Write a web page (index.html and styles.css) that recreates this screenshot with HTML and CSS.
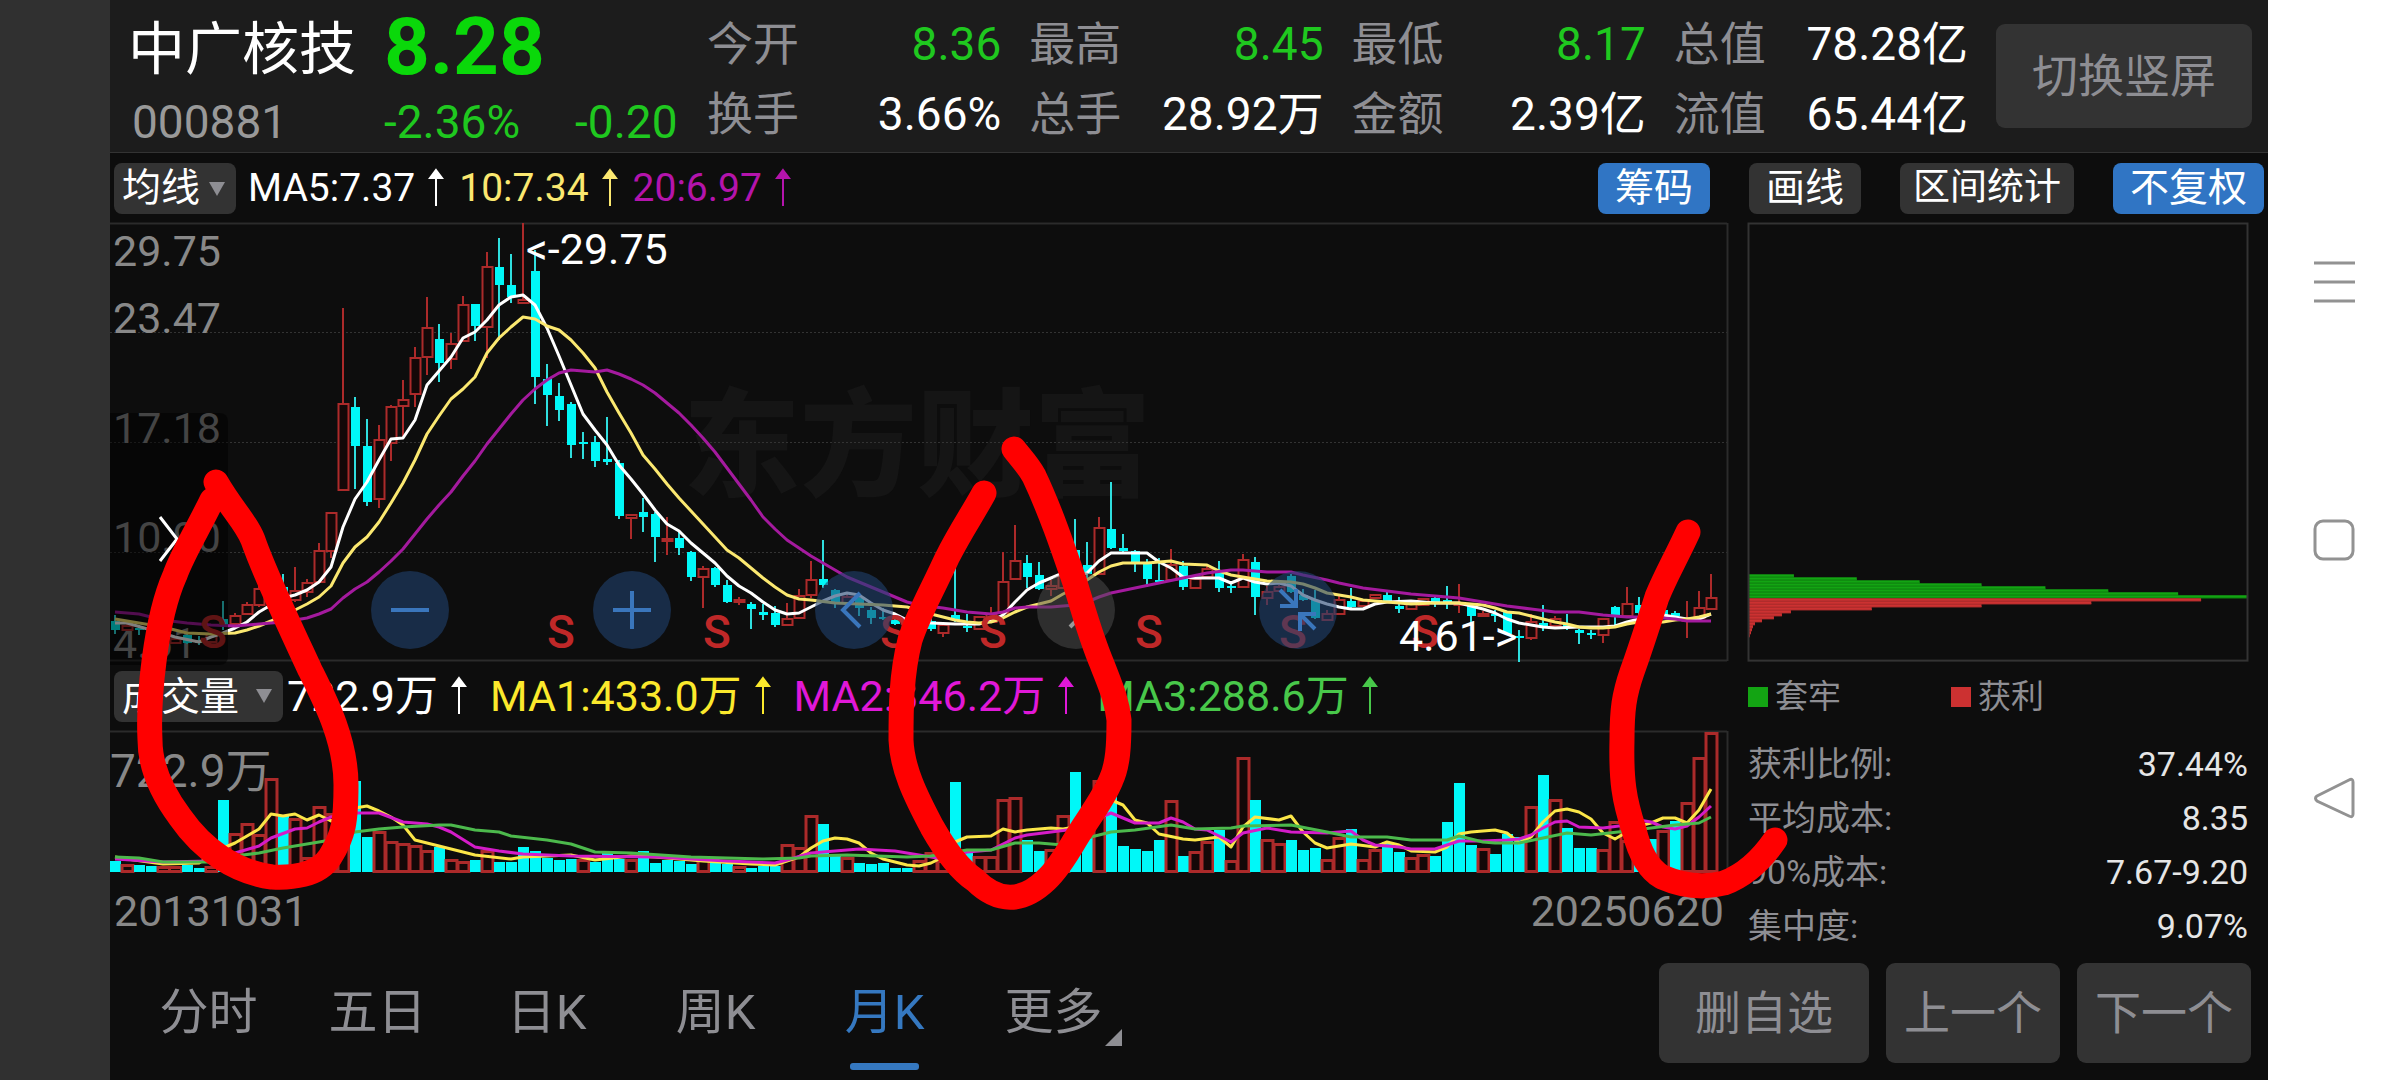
FILE: index.html
```html
<!DOCTYPE html>
<html lang="zh-CN">
<head>
    <meta charset="UTF-8">
    <title>中广核技 000881</title>
    <link rel="stylesheet" href="styles.css">
</head>
<body>
    <div class="screen">
        <div class="app">
            <header class="quote">
                <div class="stock">
                    <h1 class="name">中广核技</h1>
                    <span class="price">8.28</span>
                    <span class="code">000881</span>
                    <span class="change"><span>-2.36%</span><span>-0.20</span></span>
                </div>
                <dl class="facts">
                    <div><dt>今开</dt><dd class="down">8.36</dd></div>
                    <div><dt>最高</dt><dd class="down">8.45</dd></div>
                    <div><dt>最低</dt><dd class="down">8.17</dd></div>
                    <div><dt>总值</dt><dd>78.28亿</dd></div>
                    <div><dt>换手</dt><dd>3.66%</dd></div>
                    <div><dt>总手</dt><dd>28.92万</dd></div>
                    <div><dt>金额</dt><dd>2.39亿</dd></div>
                    <div><dt>流值</dt><dd>65.44亿</dd></div>
                </dl>
                <button class="grey-btn rotate">切换竖屏</button>
            </header>

            <div class="toolbar">
                <div class="picker">
                    <select aria-label="主图指标"><option>均线</option></select>
                </div>
                <div class="ma">
                    <span class="white">MA5:7.37<svg class="up" viewBox="0 0 12 36"><path d="M6 36V6M6 0L12 8H0Z"/></svg></span>
                    <span class="pale">10:7.34<svg class="up" viewBox="0 0 12 36"><path d="M6 36V6M6 0L12 8H0Z"/></svg></span>
                    <span class="purple">20:6.97<svg class="up" viewBox="0 0 12 36"><path d="M6 36V6M6 0L12 8H0Z"/></svg></span>
                </div>
                <div class="tools">
                    <button class="on">筹码</button>
                    <button>画线</button>
                    <button class="wide">区间统计</button>
                    <button class="on">不复权</button>
                </div>
            </div>

            <main class="body">
                <section class="charts">
                    <div class="kline">
                        <svg id="kline" viewBox="110 223 1618 438">
                            <text class="watermark" x="683" y="487">东方财富</text>
                            <path class="grid" d="M110 332.5H1727M110 442.5H1727M110 552.5H1727"/>
                            <path class="frame" d="M110 223.5H1727M1727.5 223V661M110 660.5H1727"/>
                            <g class="axis">
                                <text x="113" y="266">29.75</text>
                                <text x="113" y="333">23.47</text>
                                <text x="113" y="443">17.18</text>
                                <text x="113" y="552">10.90</text>
                                <text x="113" y="658">4.61</text>
                            </g>
                            <g id="candles"></g>
                            <g id="averages"></g>
                            <g class="sell">
                                <text x="213" y="648">S</text>
                                <text x="561" y="648">S</text>
                                <text x="717" y="648">S</text>
                                <text x="894" y="648">S</text>
                                <text x="993" y="648">S</text>
                                <text x="1149" y="648">S</text>
                                <text x="1293" y="648">S</text>
                                <text x="1425" y="648">S</text>
                            </g>
                            <g class="peak">
                                <text x="526" y="264">&lt;-29.75</text>
                                <text x="1399" y="651">4.61-&gt;</text>
                            </g>
                        </svg>
                        <button class="drawer" aria-label="展开"><svg viewBox="0 0 20 48"><path d="M1 2L18 24L1 46"/></svg></button>
                        <div class="controls">
                            <button aria-label="缩小"><svg viewBox="0 0 78 78"><path d="M20 39H58"/></svg></button>
                            <button aria-label="放大"><svg viewBox="0 0 78 78"><path d="M20 39H58M39 20V58"/></svg></button>
                            <button aria-label="左移"><svg viewBox="0 0 78 78"><path d="M45 22L28 39L45 56"/></svg></button>
                            <button class="off" aria-label="右移"><svg viewBox="0 0 78 78"><path d="M33 22L50 39L33 56"/></svg></button>
                            <button aria-label="收起"><svg viewBox="0 0 78 78"><path d="M21 19L36 34M21 35H37V18M56 58L42 44M41 60V43H57"/></svg></button>
                        </div>
                    </div>

                    <div class="volbar">
                        <div class="picker long">
                            <select aria-label="副图指标"><option>成交量</option></select>
                        </div>
                        <div class="ma">
                            <span class="white">722.9万<svg class="up" viewBox="0 0 12 36"><path d="M6 36V6M6 0L12 8H0Z"/></svg></span>
                            <span class="yellow">MA1:433.0万<svg class="up" viewBox="0 0 12 36"><path d="M6 36V6M6 0L12 8H0Z"/></svg></span>
                            <span class="magenta">MA2:346.2万<svg class="up" viewBox="0 0 12 36"><path d="M6 36V6M6 0L12 8H0Z"/></svg></span>
                            <span class="green">MA3:288.6万<svg class="up" viewBox="0 0 12 36"><path d="M6 36V6M6 0L12 8H0Z"/></svg></span>
                        </div>
                    </div>

                    <svg id="volume" viewBox="110 731 1618 142">
                        <path class="frame" d="M110 731.5H1727M1727.5 731V872"/>
                        <text class="volmax" x="110" y="787">722.9万</text>
                        <g id="bars"></g>
                        <g id="volaverages"></g>
                    </svg>
                    <div class="dates"><span>20131031</span><span>20250620</span></div>
                </section>

                <aside class="chips">
                    <svg id="chips" viewBox="0 0 501 440">
                        <g id="chiprows"></g>
                        <rect class="box" x="0.5" y="0.5" width="500" height="438"/>
                    </svg>
                    <div class="legend">
                        <span class="lost">套牢</span>
                        <span class="gain">获利</span>
                    </div>
                    <dl class="stats">
                        <div><dt>获利比例:</dt><dd>37.44%</dd></div>
                        <div><dt>平均成本:</dt><dd>8.35</dd></div>
                        <div><dt>90%成本:</dt><dd>7.67-9.20</dd></div>
                        <div><dt>集中度:</dt><dd>9.07%</dd></div>
                    </dl>
                </aside>
            </main>

            <footer class="bottom">
                <nav class="tabs">
                    <button>分时</button>
                    <button>五日</button>
                    <button>日K</button>
                    <button>周K</button>
                    <button class="active">月K</button>
                    <button class="more">更多</button>
                </nav>
                <div class="actions">
                    <button class="grey-btn">删自选</button>
                    <button class="grey-btn">上一个</button>
                    <button class="grey-btn">下一个</button>
                </div>
            </footer>
        </div>

        <nav class="system">
            <button aria-label="菜单"><svg viewBox="0 0 44 44"><path d="M2 3H43M2 22H43M2 41H43"/></svg></button>
            <button aria-label="主页"><svg viewBox="0 0 44 44"><rect x="3" y="3" width="38" height="38" rx="8"/></svg></button>
            <button aria-label="返回"><svg viewBox="0 0 44 44"><path d="M37 4L5 20Q2 22 5 25L37 40Q41 42 41 38V6Q41 2 37 4Z"/></svg></button>
        </nav>

        <svg class="marks" viewBox="0 0 2400 1080" preserveAspectRatio="none">
            <path d="M216 482C232 510 246 522 253 540C265 575 300 648 310 670C325 700 346 740 346 785C346 820 344 835 330 857C318 876 290 878 272 877C235 872 203 850 180 817C160 790 150 765 150 740C148 700 155 620 175 575C182 555 200 525 212 500"/>
            <path d="M984 493C972 515 960 532 947 558C930 595 918 615 910 640C901 675 901 710 901 740C902 768 915 795 932 827C945 850 960 870 975 880C998 903 1022 903 1046 880C1058 869 1068 852 1075 840C1088 818 1103 800 1111 780C1118 765 1119 745 1119 720C1117 700 1110 685 1102 664C1090 635 1085 615 1075 583C1062 545 1050 510 1034 476C1028 465 1020 457 1014 449"/>
            <path d="M1688 532C1675 560 1665 577 1657 597C1648 625 1640 650 1632 672C1624 695 1622 710 1622 740C1621 780 1624 800 1634 830C1640 855 1650 870 1662 877C1685 887 1705 888 1724 883C1748 874 1764 856 1775 840"/>
        </svg>
    </div>
    <script src="chart.js"></script>
</body>
</html>
```

FILE: styles.css
```css
* {
    box-sizing: border-box;
}
body {
    margin: 0;
    background: #303030;
    color: #fff;
    font-family: Roboto, "Noto Sans CJK SC", sans-serif;
}
button, select {
    font-family: inherit;
    color: inherit;
    line-height: 50px;
    border: none;
    padding: 0;
    margin: 0;
    cursor: pointer;
}
dl, dd, h1 {
    margin: 0;
}
svg {
    display: block;
    overflow: visible;
}
.screen {
    position: relative;
    display: flex;
    min-height: 100vh;
    padding-left: 110px;
}
.app {
    flex: 1;
    min-width: 0;
    display: flex;
    flex-direction: column;
    background: #0d0d0d;
}

/* quote header */
.quote {
    display: flex;
    align-items: center;
    height: 153px;
    padding: 0 16px 0 18px;
    background: #1c1c1c;
    border-bottom: 1px solid #333;
}
.stock {
    display: grid;
    grid-template-columns: 256px 1fr;
    flex: 0 0 579px;
    align-items: center;
}
.name {
    padding-top: 6px;
    font-size: 57px;
    font-weight: 400;
    line-height: 82px;
}
.price {
    font-size: 80px;
    font-weight: 700;
    line-height: 82px;
    color: #0ad80a;
}
.code, .change {
    padding: 4px 0 0 4px;
    font-size: 46px;
    line-height: 54px;
    color: #999;
}
.change {
    display: flex;
    gap: 55px;
    padding-left: 0;
    color: #1fc81f;
}
.facts {
    flex: 1;
    display: grid;
    grid-template-columns: repeat(4, 1fr);
    column-gap: 28px;
    padding-top: 6px;
    font-size: 46px;
    line-height: 70px;
    white-space: nowrap;
}
.facts div {
    display: flex;
    justify-content: space-between;
}
.facts dt {
    color: #8e8e93;
}
.down {
    color: #1fc81f;
}
.grey-btn {
    height: 100px;
    border-radius: 9px;
    background: #333;
    color: #8e8e93;
    font-size: 46px;
}
.rotate {
    margin-left: 28px;
    padding: 0 36px;
    height: 104px;
}

/* indicator rows */
.toolbar, .volbar {
    display: flex;
    align-items: center;
    height: 70px;
    padding: 0 4px;
    font-size: 39px;
    line-height: 50px;
    white-space: nowrap;
}
.volbar {
    font-size: 43px;
}
.picker {
    position: relative;
    width: 122px;
}
.picker.long {
    width: 169px;
}
.picker::after {
    content: "";
    position: absolute;
    right: 11px;
    top: 19px;
    border: 8px solid transparent;
    border-top: 14px solid #8e8e93;
    border-bottom: none;
    pointer-events: none;
}
.picker select {
    appearance: none;
    width: 100%;
    height: 51px;
    padding-left: 8px;
    border-radius: 8px;
    background: #333;
    color: #fff;
    font-size: 39px;
}
.ma {
    display: flex;
    gap: 17px;
    margin-left: 12px;
}
.volbar .ma {
    gap: 25px;
    margin-left: 4px;
}
.ma span {
    display: flex;
    align-items: center;
    gap: 15px;
}
.up {
    width: 12px;
    height: 36px;
    fill: currentColor;
    stroke: currentColor;
    stroke-width: 2;
}
.white { color: #fff; }
.pale { color: #fbe870; }
.purple { color: #b414ac; }
.yellow { color: #fbe92c; }
.magenta { color: #e018d8; }
.green { color: #48c84a; }
.tools {
    display: flex;
    gap: 39px;
    margin-left: auto;
}
.tools button {
    height: 51px;
    padding: 0 17px;
    border-radius: 8px;
    background: #333;
    color: #fff;
    font-size: 39px;
}
.tools .wide {
    padding: 0 13px;
    font-size: 37px;
}
.tools .on {
    background: #3075c4;
}

/* charts */
.body {
    display: grid;
    grid-template-columns: minmax(0, 1618fr) minmax(0, 540fr);
}
.charts svg, .chips svg {
    width: 100%;
}
.kline {
    position: relative;
}
.frame, .box {
    fill: none;
    stroke: #2b2b2b;
    stroke-width: 2;
}
.box {
    stroke: #333;
}
.grid {
    stroke: #333;
    stroke-dasharray: 2 2;
}
.watermark {
    font-size: 117px;
    font-weight: 900;
    fill: #151515;
}
.axis, .peak {
    font-size: 43px;
    fill: #888;
}
.peak {
    fill: #fff;
}
.sell {
    font-size: 46px;
    font-weight: 500;
    text-anchor: middle;
    fill: #bf2828;
}
.volmax {
    font-size: 46px;
    fill: #888;
}
.rise {
    fill: #140808;
    stroke: #ac2a2a;
    stroke-width: 2;
}
#bars .rise {
    stroke-width: 3;
}
.fall {
    fill: #00f8f8;
}
.wick-rise, .wick-fall {
    stroke: #ac2a2a;
    stroke-width: 2;
}
.wick-fall {
    stroke: #2fdede;
}
.line {
    fill: none;
    stroke: currentColor;
    stroke-width: 3;
    stroke-linejoin: round;
}
.charts .drawer {
    position: absolute;
    left: 0;
    bottom: -4px;
    width: 118px;
    height: 252px;
    padding-left: 49px;
    border-radius: 0 8px 8px 0;
    background: rgba(0, 0, 0, .5);
}
.charts .drawer svg {
    width: 20px;
    height: 48px;
    fill: none;
    stroke: #fff;
    stroke-width: 3;
}
.controls {
    position: absolute;
    left: 261px;
    bottom: 12px;
    display: flex;
    gap: 144px;
}
.controls button {
    width: 78px;
    height: 78px;
    border-radius: 50%;
    background: rgba(32, 65, 110, .6);
}
.controls .off {
    background: rgba(80, 80, 80, .5);
}
.controls svg {
    fill: none;
    stroke: #3a76bc;
    stroke-width: 4;
}
.controls .off svg {
    stroke: #999;
}
.charts .up {
    width: 12px;
}
.dates {
    display: flex;
    justify-content: space-between;
    padding: 0 4px;
    font-size: 43px;
    line-height: 76px;
    color: #888;
}

/* chip distribution */
.chips {
    padding: 0 20px;
}
.lost-row { fill: #13a413; }
.lost-edge { fill: #0f8d0f; }
.gain-row { fill: #cc3131; }
.gain-edge { fill: #b92f2f; }
.legend {
    display: grid;
    grid-template-columns: 203px 1fr;
    font-size: 33px;
    line-height: 70px;
    color: #8e8e93;
}
.legend span {
    display: flex;
    align-items: center;
    gap: 7px;
}
.legend span::before {
    content: "";
    width: 20px;
    height: 20px;
    background: #13a413;
}
.legend .gain::before {
    background: #cc3131;
}
.stats {
    padding-top: 5px;
    font-size: 34px;
    line-height: 54px;
}
.stats div {
    display: flex;
    justify-content: space-between;
}
.stats dt {
    color: #8e8e93;
}
.stats dd {
    color: #e6e6e6;
}

/* bottom bar */
.bottom {
    display: flex;
    align-items: center;
    justify-content: space-between;
    margin-top: auto;
    padding: 0 17px 17px 14px;
}
.tabs {
    display: grid;
    grid-template-columns: repeat(6, 169px);
}
.tabs button {
    position: relative;
    height: 100px;
    background: none;
    color: #8e8e93;
    font-size: 49px;
}
.tabs .active {
    color: #3578c0;
}
.tabs .active::after {
    content: "";
    position: absolute;
    left: 50px;
    right: 50px;
    bottom: -7px;
    height: 7px;
    border-radius: 3px;
    background: #3578c0;
}
.tabs .more::after {
    content: "";
    position: absolute;
    right: 16px;
    bottom: 17px;
    border-left: 17px solid transparent;
    border-bottom: 17px solid #8e8e93;
}
.actions {
    display: flex;
    gap: 17px;
}
.actions .grey-btn {
    padding: 0 18px;
}
.actions .grey-btn:first-child {
    padding: 0 36px;
}

/* phone navigation */
.system {
    display: flex;
    flex-direction: column;
    align-items: center;
    justify-content: center;
    gap: 214px;
    width: 132px;
    padding-right: 1px;
    background: #fff;
}
.system button {
    width: 44px;
    height: 44px;
    background: none;
}
.system svg {
    fill: none;
    stroke: #929292;
    stroke-width: 3;
}

/* pen marks over everything */
.marks {
    position: absolute;
    left: 0;
    top: 0;
    width: 100%;
    height: 100%;
    pointer-events: none;
    fill: none;
    stroke: #f00;
    stroke-width: 25;
    stroke-linecap: round;
    stroke-linejoin: round;
}
```

FILE: chart.js
```js
const START = 115;
const STEP = 12;
const BASE = 872;

// r/f = rise/fall, then high, body top, body bottom, low
const candles = `f615,621,630,634 r624,625,630,631 f625,628,630,635 f627,629,640,641 f630,632,640,642 r636,638,643,644
f634,635,643,644 f636,640,643,645 r631,633,642,643 f601,619,625,630 r613,615,624,625 r602,604,614,615 r584,588,605,607
r578,580,590,594 f574,587,598,600 r567,590,600,602 r579,582,592,597 r543,550,582,583 r512,512,551,558 r308,403,490,490
f397,407,446,489 f419,446,502,506 r425,439,499,508 r405,406,443,461 r380,399,406,438 r347,357,394,407 r297,327,357,375
f324,339,363,382 r333,343,359,369 r296,304,341,342 f304,304,326,341 r252,266,327,358 f238,267,285,340 f254,285,297,303
r223,299,303,303 f250,271,377,404 f364,379,395,426 f383,396,410,421 f402,404,445,458 f432,442,444,459 f436,442,461,467
f417,459,462,465 f460,463,516,519 r514,514,518,539 f498,512,517,532 f512,514,537,562 r517,538,541,555 f532,538,548,555
f551,552,577,581 r566,568,577,608 f567,568,585,587 f580,585,602,603 r597,599,602,605 f602,604,609,629 f604,612,615,620
f606,613,625,627 r603,618,625,626 r589,595,618,619 r561,579,595,598 f540,579,585,588 f589,590,603,608 r594,596,603,605
f594,598,608,616 f607,610,618,624 f608,617,619,620 f618,620,624,625 r618,620,630,631 f619,622,628,630 f618,621,629,631
r624,624,633,637 f568,615,620,622 f614,626,628,632 r616,616,629,629 r607,613,622,622 r552,581,613,615 r525,560,579,580
f555,563,577,588 f562,575,589,590 r580,585,589,596 r575,575,588,588 f519,550,570,575 f542,565,574,580 r517,527,574,575
f482,529,548,549 f534,548,551,552 f550,551,563,572 f559,564,579,587 f558,580,582,582 r549,564,580,580 f561,566,587,590
r578,578,588,588 r565,568,577,578 f561,573,588,592 f583,586,588,593 r554,559,587,588 f557,562,597,615 r586,591,598,605
r585,586,591,592 f574,576,592,593 f589,595,600,601 f590,600,618,619 r610,613,620,620 r596,599,614,615 f588,601,607,608
r599,600,606,607 r594,594,598,598 f592,595,601,602 f597,606,609,613 r602,602,609,609 r598,598,605,605 f597,598,602,607
f586,600,603,609 r584,602,605,613 f605,606,616,625 r611,613,616,617 f610,614,616,622 f611,612,634,635 f630,636,638,662
r614,621,638,640 f605,623,627,631 r616,618,626,627 f614,624,627,630 f629,630,633,644 f630,633,635,639 r618,618,635,643
f606,607,616,625 r587,603,616,617 f597,605,613,618 r604,608,615,617 f606,610,616,618 f611,613,616,618 r601,619,621,638
r591,607,618,619 r574,597,609,610`.split(/\s+/);

// top of each volume bar
const volumes = `f861 r864 f865 f866 r866 r866 f865 f868 r866 f800 r833 r823 r834 r778 f815 r818 r857 r806 r813 r815
f781 f837 r831 r841 r843 r845 r850 f847 r859 r861 f860 r850 f862 f862 f847 f851 f858 f860 f859 r859
f862 f851 f859 r859 f851 f863 f860 f861 f864 r859 f862 f864 r866 f868 f866 f866 r844 r847 r815 f824
f856 r857 f863 f864 f863 f868 f868 r860 r852 r860 f782 f850 r856 r856 r799 r797 f840 f851 r849 r815
f772 f837 r780 f790 f846 f849 f851 f840 r800 f856 r851 r841 f830 r860 r757 f800 r839 r843 f840 f850
f848 r859 r837 f829 r859 r849 f842 f852 r857 r854 f856 f822 f783 f845 r848 f854 f834 f837 r806 f775
r799 f828 f848 f848 r849 r821 r840 f847 f839 r830 f821 r802 r757 r732`.split(/\s+/);

// moving averages, index:y
const priceLines = [
    ['#fff', '0:623 1:623 3:630 5:637 7:642 8:637 9:633 10:628 11:622 12:612 13:605 14:598 15:595 16:590 17:582 18:567 19:527 20:499 21:482 22:460 23:439 24:438 25:420 26:385 27:371 28:357 29:338 30:332 31:320 32:305 33:297 34:295 35:305 36:328 37:356 38:385 39:414 40:430 41:445 42:465 43:479 44:494 45:510 46:524 47:531 48:543 49:553 50:563 51:576 52:586 53:593 54:602 55:610 56:614 57:613 58:607 59:601 60:596 61:593 62:595 63:603 64:610 65:614 66:620 68:623 70:624 72:624 73:621 74:615 75:602 76:590 77:583 78:578 79:573 80:576 81:573 82:561 83:553 84:553 86:553 87:562 88:568 89:577 90:578 92:578 93:583 94:578 95:582 96:584 97:583 98:586 99:595 100:600 101:604 102:607 103:609 104:609 105:604 106:602 108:601 110:603 112:603 113:606 114:609 115:613 116:619 117:623 118:625 119:627 120:628 122:627 124:627 125:626 126:622 127:619 128:617 129:615 130:617 131:619 132:619 133:614'],
    ['#fbe870', '0:619 2:623 4:627 6:633 8:634 10:633 11:630 12:626 13:621 14:615 15:610 16:604 17:597 18:586 19:563 20:547 21:537 22:522 23:503 24:483 25:460 26:434 27:416 28:399 29:389 30:377 31:353 32:338 33:327 34:317 35:319 36:326 37:330 38:340 39:353 40:368 41:392 42:413 43:433 44:455 45:469 46:484 47:498 48:511 49:524 50:537 51:550 52:558 53:568 54:578 55:587 56:595 57:599 58:600 60:603 62:604 64:605 66:607 67:610 68:614 69:617 70:620 71:622 72:623 73:622 74:618 75:612 76:607 77:604 78:601 79:594 80:588 81:580 82:572 83:566 84:563 86:563 88:561 89:564 91:565 92:571 93:575 94:577 95:579 96:581 98:582 99:584 100:588 101:593 103:597 104:600 106:602 108:604 110:603 112:603 114:605 115:608 116:612 117:613 118:616 119:619 120:622 121:624 122:627 123:628 124:628 125:627 126:624 127:622 129:622 130:620 131:619 132:617 133:614'],
    ['#a41a9e', '0:612 2:614 4:620 6:623 8:625 10:626 12:624 14:622 16:618 17:614 18:609 19:598 20:589 21:582 22:572 23:561 24:549 25:534 26:519 27:505 28:492 29:476 30:461 31:444 32:429 33:414 34:400 35:389 36:380 37:373 38:370 39:371 40:372 41:370 42:374 43:379 44:385 45:393 46:403 47:413 48:425 49:438 50:452 51:468 52:484 53:500 54:517 55:529 56:540 57:548 58:556 59:563 60:570 61:577 62:582 63:587 64:592 65:597 66:602 67:605 69:608 71:612 73:614 74:612 75:608 76:607 78:607 80:605 81:602 82:597 83:593 85:588 87:583 89:578 91:573 93:570 94:570 96:572 98:572 99:575 101:580 102:583 104:588 106:591 108:594 110:596 112:598 114:602 116:606 118:609 120:612 122:612 124:615 126:617 128:617 130:619 131:621 133:621']
];
const volumeLines = [
    ['#fbe648', '0:857 1:859 4:864 7:863 9:848 10:843 12:829 13:814 14:816 15:814 16:820 17:815 18:821 20:808 21:806 22:811 23:817 24:825 25:840 26:843 28:849 29:852 30:855 33:859 34:857 38:855 40:860 43:856 45:857 49:861 53:864 55:865 56:861 57:857 58:848 59:841 60:838 61:839 62:843 63:853 64:859 66:865 67:866 68:863 69:857 70:842 71:837 73:836 74:829 75:832 76:830 78:828 79:829 80:827 81:820 82:807 83:800 84:805 85:820 86:823 87:834 89:839 90:840 92:837 93:847 94:827 95:817 97:820 98:816 99:832 100:843 101:848 103:844 105:847 106:842 107:845 108:851 110:852 111:847 112:834 113:832 115:830 116:833 117:843 118:837 119:822 120:811 121:809 122:812 123:819 124:833 125:839 126:832 127:826 128:823 129:818 130:818 131:823 132:810 133:789'],
    ['#d41cc8', '0:859 4:862 8:861 10:853 12:846 13:838 15:829 16:828 17:822 18:817 20:813 22:813 24:822 26:824 27:827 28:832 30:847 32:851 34:854 38:856 45:857 51:861 55:863 56:860 58:853 60:851 62:849 65:851 67:855 69:859 71:852 73:850 74:844 75:838 76:835 78:832 80:829 82:818 83:813 84:818 85:823 87:823 88:818 89:822 90:829 91:830 93:842 94:833 96:828 98:832 101:833 103:831 104:840 105:845 107:847 108:849 110:849 112:841 114:841 116:840 117:839 118:835 119:828 120:822 121:821 122:827 124:828 126:825 127:820 128:822 129:827 130:829 131:826 132:817 133:806'],
    ['#4cb94c', '0:857 2:858 4:862 8:862 10:856 12:853 14:848 16:844 18:840 20:832 22:829 24:827 27:825 28:825 30:830 32:832 33:836 36:840 38:844 40:852 43:853 48:857 54:859 57:858 58:856 61:855 66:857 68:856 71:850 73:850 75:843 77:843 79:845 81:838 83:832 85:830 88:825 90:829 93:828 94:826 98:825 101:832 103:837 106:837 108:840 111:840 112:836 114:842 115:843 117:843 119:838 121:833 123:835 126:831 128:828 130:825 132:823 133:817']
];

const lostRows = [45, 108, 171, 233, 297, 360, 430, 500];
const gainRows = [453, 343, 233, 123, 42, 33, 25, 13, 6, 4, 3, 2, 1];

function x(i) {
    return START + STEP * i;
}

function drawCandles() {
    let out = '';
    candles.forEach((item, i) => {
        const rise = item[0] === 'r';
        const [high, top, bottom, low] = item.slice(1).split(',').map(Number);
        if (rise) {
            out += `<path class="wick-rise" d="M${x(i)} ${high}V${top}M${x(i)} ${bottom}V${low}"/>`;
            out += `<rect class="rise" x="${x(i) - 4.5}" y="${top + 1}" width="10" height="${Math.max(bottom - top - 1, 1)}"/>`;
        } else {
            out += `<path class="wick-fall" d="M${x(i)} ${high}V${low}"/>`;
            out += `<rect class="fall" x="${x(i) - 4}" y="${top}" width="9" height="${bottom - top}"/>`;
        }
    });
    document.getElementById('candles').innerHTML = out;
}

function drawVolume() {
    let out = '';
    volumes.forEach((item, i) => {
        const top = Number(item.slice(1));
        if (item[0] === 'r') {
            out += `<rect class="rise" x="${x(i) - 5}" y="${top + 1.5}" width="11" height="${BASE - top - 2}"/>`;
        } else {
            out += `<rect class="fall" x="${x(i) - 5}" y="${top}" width="11" height="${BASE - top}"/>`;
        }
    });
    document.getElementById('bars').innerHTML = out;
}

function drawLines(id, lines) {
    document.getElementById(id).innerHTML = lines.map(([color, data]) => {
        const points = data.split(' ').map(p => {
            const [i, y] = p.split(':').map(Number);
            return x(i) + ',' + y;
        });
        return `<polyline class="line" color="${color}" points="${points.join(' ')}"/>`;
    }).join('');
}

function drawChips() {
    let out = '';
    let y = 352;
    function row(kind, width) {
        out += `<rect class="${kind}-row" x="1" y="${y}" width="${width}" height="3"/>`;
        out += `<rect class="${kind}-edge" x="1" y="${y + 2}" width="${width}" height="1"/>`;
        y += 3;
    }
    lostRows.forEach(w => row('lost', w));
    gainRows.forEach(w => row('gain', w));
    document.getElementById('chiprows').innerHTML = out;
}

drawCandles();
drawVolume();
drawLines('averages', priceLines);
drawLines('volaverages', volumeLines);
drawChips();
```
